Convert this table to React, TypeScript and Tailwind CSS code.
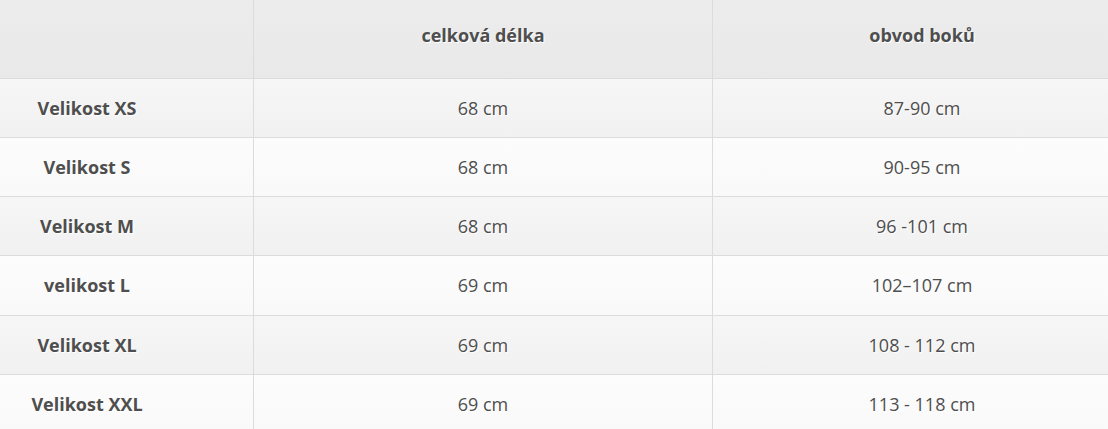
import React from "react";

const rows = [
  ["Velikost XS", "68 cm", "87-90 cm"],
  ["Velikost S", "68 cm", "90-95 cm"],
  ["Velikost M", "68 cm", "96 -101 cm"],
  ["velikost L", "69 cm", "102–107 cm"],
  ["Velikost XL", "69 cm", "108 - 112 cm"],
  ["Velikost XXL", "69 cm", "113 - 118 cm"],
];

export default function App() {
  return (
    <div
      className="w-[1108px] h-[429px] overflow-hidden bg-white text-[#4e4e4e] text-[18px] [text-shadow:1px_1px_0_#fff]"
      style={{ fontFamily: '"Open Sans", sans-serif' }}
    >
      <div className="grid grid-cols-[254px_459px_1fr]">
        <div className="h-[79px] bg-gradient-to-b from-[#ececec] to-[#e9e9e9] border-r border-b border-[#dcdcdc]" />
        <div className="h-[79px] bg-gradient-to-b from-[#ececec] to-[#e9e9e9] border-r border-b border-[#dcdcdc] flex items-center justify-center pb-[7px] font-bold">
          celková délka
        </div>
        <div className="h-[79px] bg-gradient-to-b from-[#ececec] to-[#e9e9e9] border-b border-[#dcdcdc] flex items-center justify-center pl-[23px] pb-[7px] font-bold">
          obvod boků
        </div>
        {rows.map((r, i) => {
          const bg = i % 2 === 0 ? "bg-gradient-to-b from-[#f6f6f6] to-[#f1f1f1]" : "bg-gradient-to-b from-[#fcfcfc] to-[#f9f9f9]";
          const h = i === 3 ? "h-[60px]" : "h-[59px]";
          return (
            <React.Fragment key={i}>
              <div className={`${h} ${bg} border-r border-b border-[#dcdcdc] flex items-center justify-center pr-[79px] font-bold`}>
                {r[0]}
              </div>
              <div className={`${h} ${bg} border-r border-b border-[#dcdcdc] flex items-center justify-center`}>
                {r[1]}
              </div>
              <div className={`${h} ${bg} border-b border-[#dcdcdc] flex items-center justify-center pl-[23px]`}>
                {r[2]}
              </div>
            </React.Fragment>
          );
        })}
      </div>
    </div>
  );
}
